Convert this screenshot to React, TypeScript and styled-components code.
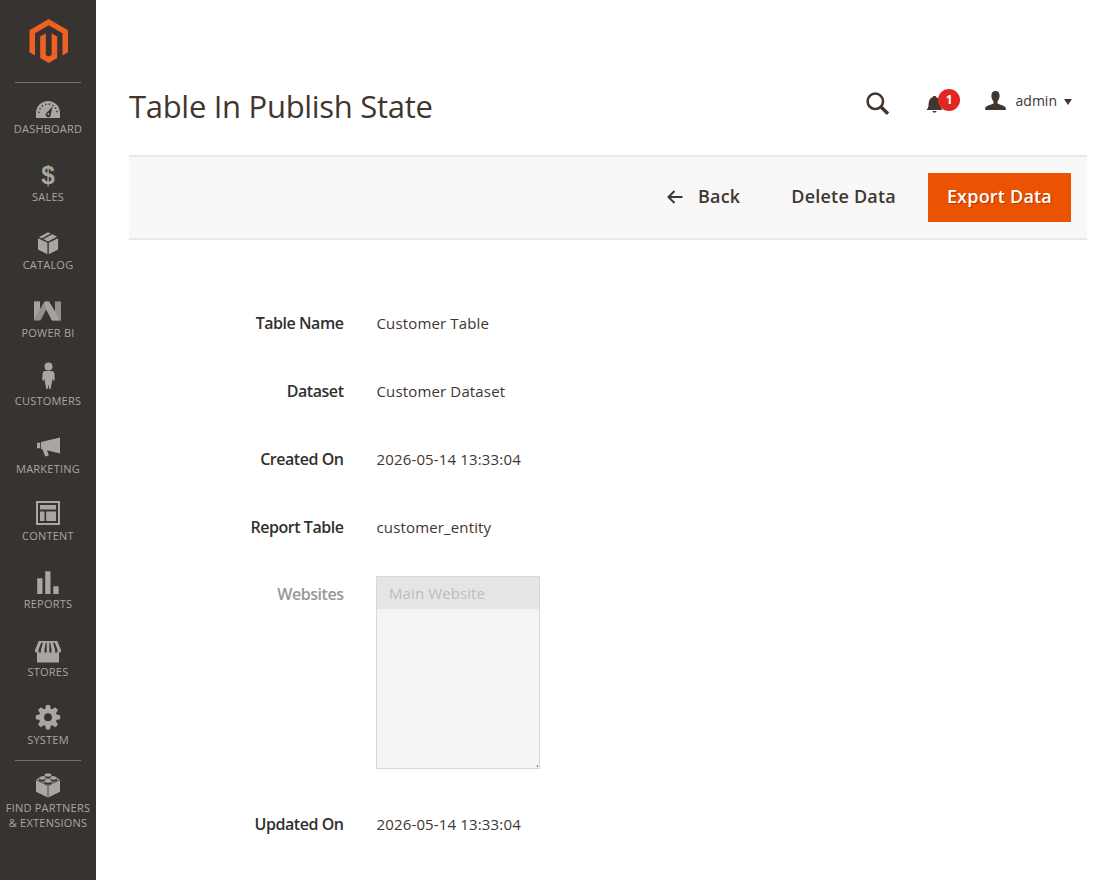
import React from "react";
import styled, { createGlobalStyle } from "styled-components";

const GlobalStyle = createGlobalStyle`
  * { box-sizing: border-box; }
  body { margin: 0; background: #fff; color: #41362f; font-family: "Open Sans", "Noto Sans", sans-serif; }
`;

const Page = styled.div`
  display: flex;
  width: 1120px;
  height: 880px;
  overflow: hidden;
`;
const Sidebar = styled.nav`
  flex: none;
  width: 96px;
  background: #373330;
  color: #aaa6a0;
  display: flex;
  flex-direction: column;
`;
const Logo = styled.div`
  height: 82px;
  padding: 19px 0 0 29px;
  svg { display: block; }
`;
const Divider = styled.div<{ $m?: string }>`
  height: 1px;
  flex: none;
  background: #736f6b;
  margin: ${(p) => p.$m || "0 15px"};
`;
const Item = styled.div`
  height: 67.9px;
  flex: none;
  display: flex;
  flex-direction: column;
  align-items: center;
  svg { display: block; flex: none; fill: #aaa6a0; }
`;
const ItemLabel = styled.span`
  margin-top: -0.9px;
  font-size: 11px;
  line-height: 15px;
  text-align: center;
  white-space: pre;
  letter-spacing: 0.22px;
`;
const Main = styled.main`
  flex: 1;
  padding: 80px 33px 0 33px;
`;
const Header = styled.header`
  height: 75px;
  display: flex;
  justify-content: space-between;
`;
const Title = styled.h1`
  margin: 4px 0 0;
  font-size: 31px;
  line-height: 44px;
  font-weight: 400;
  letter-spacing: -0.3px;
`;
const Tools = styled.div`
  display: flex;
  padding: 8px 15px 0 0;
  svg { display: block; }
`;
const SearchBox = styled.div`
  width: 60px;
  padding-top: 4px;
`;
const Bell = styled.div`
  position: relative;
  width: 59px;
  padding-top: 7px;
`;
const Badge = styled.span`
  position: absolute;
  left: 12.5px;
  top: 0.5px;
  width: 22px;
  height: 22px;
  border-radius: 50%;
  background: #e22626;
  color: #fff;
  font-size: 12px;
  line-height: 22px;
  font-weight: 700;
  text-align: center;
`;
const User = styled.div`
  display: flex;
  font-size: 14px;
  line-height: 20px;
  padding-top: 2px;
  svg { margin-top: 1px; }
`;
const UserName = styled.span`
  margin: 1px 7px 0 10px;
`;
const Caret = styled.i`
  margin-top: 9px;
  width: 0;
  height: 0;
  border: solid transparent;
  border-width: 6px 4.5px 0;
  border-top-color: #41362f;
`;
const ActionBar = styled.div`
  height: 85px;
  width: 958px;
  background: #f8f8f8;
  border: solid #e9e9e9;
  border-width: 2px 0;
  padding-right: 16px;
  display: flex;
  align-items: center;
  justify-content: flex-end;
`;
const Action = styled.button<{ $primary?: boolean; $gap?: number }>`
  border: 0;
  height: 49px;
  padding: 0 19px 4px;
  margin-left: ${(p) => p.$gap ?? 0}px;
  display: flex;
  align-items: center;
  font: 600 18px/24px "Open Sans", sans-serif;
  letter-spacing: 0.2px;
  white-space: nowrap;
  color: ${(p) => (p.$primary ? "#fff" : "#41362f")};
  background: ${(p) => (p.$primary ? "#eb5202" : "transparent")};
  text-shadow: ${(p) => (p.$primary ? "1px 1px 0 rgba(0,0,0,.25)" : "none")};
  svg { margin: 3px 15px 0 0; }
`;
const Form = styled.div`
  padding-top: 66px;
`;
const Field = styled.div<{ $off?: boolean }>`
  display: grid;
  grid-template-columns: 214.5px 1fr;
  column-gap: ${(p) => (p.$off ? 32.5 : 33)}px;
  height: ${(p) => (p.$off ? 231 : 68)}px;
  margin-top: ${(p) => (p.$off ? -2 : 0)}px;
`;
const Label = styled.label<{ $off?: boolean }>`
  text-align: right;
  font-size: 16px;
  line-height: ${(p) => (p.$off ? 36 : 34)}px;
  font-weight: 600;
  letter-spacing: -0.46px;
  color: ${(p) => (p.$off ? "#979797" : "#303030")};
`;
const Value = styled.div`
  font-size: 15px;
  line-height: 34px;
  letter-spacing: 0.15px;
`;
const List = styled.div`
  position: relative;
  width: 164px;
  height: 193px;
  border: 1px solid #d8d8d8;
  background: #f4f4f4;
`;
const Option = styled.div`
  height: 32px;
  padding-left: 12px;
  background: #e5e5e5;
  color: #bdbdbd;
  font-size: 15px;
  line-height: 33px;
  letter-spacing: 0.1px;
`;
const Grip = styled.i`
  position: absolute;
  right: 1px;
  bottom: 1px;
  width: 1px;
  height: 2px;
  background: #777;
`;

const D = "#373330";
const items: { label: string; icon: React.ReactNode }[] = [
  {
    label: "DASHBOARD",
    icon: (
      <>
        <path d="M8 32V27a12 12 0 0 1 24 0v5z" />
        <path d="M11 27a9 9 0 0 1 18 0" fill="none" stroke={D} strokeWidth="1.5" strokeDasharray="1.4 2.3" />
        <path d="M24.6 20.2l-1.8 8.2a2.6 2.6 0 1 1-3.8-2z" fill={D} />
        <circle cx="20.4" cy="28" r="0.9" />
      </>
    ),
  },
  {
    label: "SALES",
    icon: (
      <text x="20" y="29.500" textAnchor="middle" fontFamily="Liberation Sans" fontWeight="700" fontSize="26" textLength="13.500" lengthAdjust="spacingAndGlyphs">$</text>
    ),
  },
  {
    label: "CATALOG",
    icon: (
      <>
        <path d="M10 16.3l9.4 4.5v11.4L10 27.4zM20.8 20.8l9.3-4.5v11.1l-9.3 4.8z" />
        <path d="M20 10.2l2.8 1.4-9 4.8-2.8-1.5zM24.2 12.2l5 2.6-9.2 4.7-4.6-2.3z" />
      </>
    ),
  },
  {
    label: "POWER BI",
    icon: (
      <>
        <path d="M6 11.5h6V19l4.500-7.500H21l6 10v-10h6v19h-9L18.500 19l-6 11.500H6z" fill="#93908b" />
        <path d="M6 11.5h6V19l-6 10zM16.500 11.500H21l11 19h-8L18 19.500z" fill="#aaa6a1" opacity=".8" />
      </>
    ),
  },
  {
    label: "CUSTOMERS",
    icon: (
      <>
        <circle cx="20.5" cy="8.500" r="4" />
        <path d="M17.500 13h6c2.200 0 2.900 1.500 3 3.500l.2 6h-1.900l-.6-2-.3 4-1.300 6.600h-1.300l-.8-4.600-.8 4.600h-1.300L17 24.500l-.3-4-.6 2h-1.800l.2-6c.1-2 .8-3.500 3-3.500z" />
      </>
    ),
  },
  {
    label: "MARKETING",
    icon: <path d="M9 17.800h3.200v5.400H9zM13 17.100L32 12.500v16l-13-3.300 1.800 5.300-3.600 1-2.600-7-1.600-.6z" />,
  },
  {
    label: "CONTENT",
    icon: (
      <>
        <path d="M9 9h22v22H9z" fill="none" stroke="#aaa6a0" strokeWidth="2" />
        <path d="M12 12h16v4.500H12zM12 18.500h4.500v9.500H12zM18.200 18.500H28v9.500h-9.800z" />
      </>
    ),
  },
  {
    label: "REPORTS",
    icon: <path d="M9.200 17.300h5.300v15.700H9.200zM17.200 10.300h5.300v22.700h-5.300zM25.300 25.300h5.300v7.700h-5.300z" />,
  },
  {
    label: "STORES",
    icon: (
      <>
        <path d="M10.700 12h18.600L33 21v2.200h-2V33.400H9V23.200H7V21z" />
        <path d="M13.200 13.800l-2.700 7v2.600h2.400v-2.600l2-7zM17.700 13.800l-1.200 7v2.600h2.200v-9.600zM22.300 13.800l1.200 7v2.600h-2.200v-9.600zM26.800 13.800l2.700 7v2.600h-2.400v-2.600l-2-7z" fill={D} />
      </>
    ),
  },
  {
    label: "SYSTEM",
    icon: (
      <>
        {[0, 45, 90, 135].map((a) => (
          <path key={a} d="M17.200 12L18 8h4l.8 4v16.400l-.8 4h-4l-.8-4z" transform={`rotate(${a} 20 20.200)`} />
        ))}
        <circle cx="20" cy="20.200" r="9" />
        <circle cx="20" cy="20.200" r="3.900" fill={D} />
      </>
    ),
  },
  {
    label: "FIND PARTNERS\n& EXTENSIONS",
    icon: (
      <>
        <path d="M8 14.500L20 9l12 5.500v12.300l-12 5.700-12-5.700z" />
        <path d="M8 14.800l12 5.700 12-5.700M20 20.500V32" fill="none" stroke={D} strokeWidth="0.8" />
        {[[20, 10], [14.5, 13], [25.5, 13], [20, 16]].map(([x, y]) => (
          <g key={`${x}-${y}`}>
            <path d={`M${x - 3.5} ${y}v1.700a3.500 1.900 0 0 0 7 0v-1.700z`} fill={D} />
            <ellipse cx={x} cy={y} rx="3.300" ry="1.700" />
          </g>
        ))}
      </>
    ),
  },
];

const fields = [
  ["Table Name", "Customer Table"],
  ["Dataset", "Customer Dataset"],
  ["Created On", "2026-05-14 13:33:04"],
  ["Report Table", "customer_entity"],
];

export default function App() {
  return (
    <Page>
      <GlobalStyle />
      <Sidebar>
        <Logo>
          <svg width="40" height="44" viewBox="-0.2 0 40 44" fill="#ee6123">
            <path d="M19.500 0L38.800 11.200V33.200l-5.500 3.200V14.300L19.500 6.300l-13.700 8v22.100L.300 33.200V11.200z" />
            <path d="M11 17.400l5.600-3.200v21.700l2.900 1.700 2.900-1.700V14.200l5.600 3.200v21.700L19.500 44 11 39.100z" />
          </svg>
        </Logo>
        <Divider $m="0 15px 3px" />
        {items.map((it, i) => (
          <React.Fragment key={it.label}>
            {i === 10 && <Divider $m="-5px 15px 4px" />}
            <Item>
              <svg width="40" height="36" viewBox="0 0 40 36">{it.icon}</svg>
              <ItemLabel>{it.label}</ItemLabel>
            </Item>
          </React.Fragment>
        ))}
      </Sidebar>
      <Main>
        <Header>
          <Title>Table In Publish State</Title>
          <Tools>
            <SearchBox>
              <svg width="24" height="24" viewBox="0 0 24 24" fill="none" stroke="#41362f">
                <circle cx="9.300" cy="9.300" r="7.700" strokeWidth="2.500" />
                <path d="M14.800 14.800l7.200 7" strokeWidth="3.400" />
              </svg>
            </SearchBox>
            <Bell>
              <svg width="18" height="18" viewBox="0 0 18 18" fill="#41362f">
                <path d="M.500 15c1-1.200 2-2.500 2-5 0-4.500 1.500-7 4.200-7.700C6.700.6 10.300.6 10.300 2.300 13 3 14.500 5.500 14.500 10c0 2.500 1 3.800 2 5zM6.500 16h4c-.4 2.200-3.600 2.200-4 0z" />
              </svg>
              <Badge>1</Badge>
            </Bell>
            <User>
              <svg width="21" height="20" viewBox="0 0 21 20" fill="#41362f">
                <path d="M10.500 0c3 0 4.300 2 4.100 5-.1 2.300-.9 4.200-2.100 5.300v2.200c1 1 8.300 1.800 8.300 4.700V19H.2v-1.800c0-2.900 7.300-3.700 8.300-4.700v-2.200C7.300 9.200 6.500 7.300 6.400 5c-.2-3 1.100-5 4.100-5z" />
              </svg>
              <UserName>admin</UserName>
              <Caret />
            </User>
          </Tools>
        </Header>
        <ActionBar>
          <Action>
            <svg width="16" height="14" viewBox="0 0 16 14" fill="none" stroke="#41362f" strokeWidth="2">
              <path d="M15.500 7H1.500M7.500 1l-6 6 6 6" />
            </svg>
            Back
          </Action>
          <Action $gap={13}>Delete Data</Action>
          <Action $primary $gap={13}>Export Data</Action>
        </ActionBar>
        <Form>
          {fields.map(([l, v]) => (
            <Field key={l}>
              <Label>{l}</Label>
              <Value>{v}</Value>
            </Field>
          ))}
          <Field $off>
            <Label $off>Websites</Label>
            <List>
              <Option>Main Website</Option>
              <Grip />
            </List>
          </Field>
          <Field>
            <Label>Updated On</Label>
            <Value>2026-05-14 13:33:04</Value>
          </Field>
        </Form>
      </Main>
    </Page>
  );
}
